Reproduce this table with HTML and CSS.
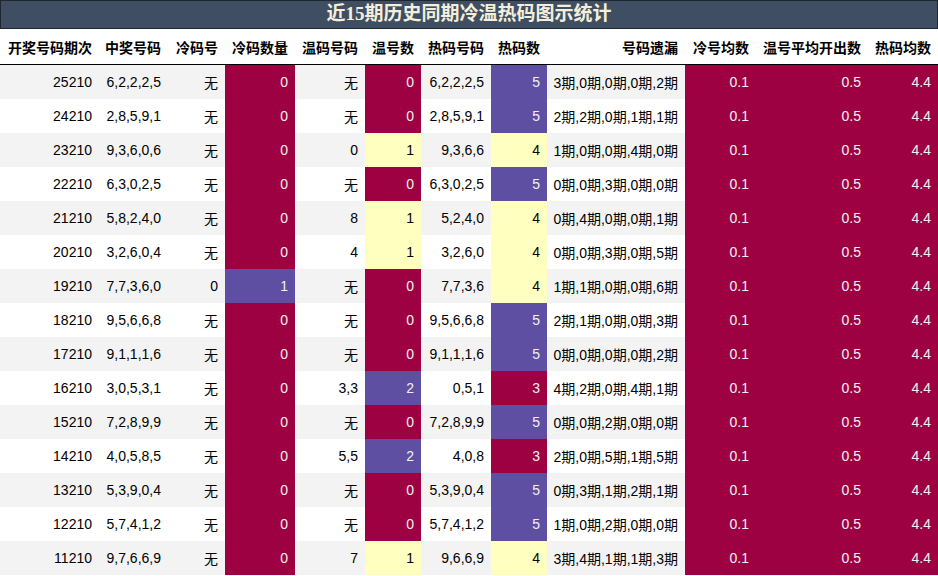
FILE: index.html
```html
<!DOCTYPE html>
<html lang="zh">
<head>
<meta charset="utf-8">
<title>近15期历史同期冷温热码图示统计</title>
<link rel="stylesheet" href="styles.css">
</head>
<body>
<div class="title">近15期历史同期冷温热码图示统计</div>
<table class="stats">
  <colgroup>
    <col class="w99"><col class="w69"><col class="w57"><col class="w70"><col class="w70"><col class="w56">
    <col class="w70"><col class="w56"><col class="w138"><col class="w71"><col class="w112"><col class="w70">
  </colgroup>
  <thead>
    <tr>
      <th>开奖号码期次</th><th>中奖号码</th><th>冷码号</th><th>冷码数量</th><th>温码号码</th><th>温号数</th>
      <th>热码号码</th><th>热码数</th><th>号码遗漏</th><th>冷号均数</th><th>温号平均开出数</th><th>热码均数</th>
    </tr>
  </thead>
  <tbody>
    <tr><td>25210</td><td>6,2,2,2,5</td><td>无</td><td class="r">0</td><td>无</td><td class="r">0</td><td>6,2,2,2,5</td><td class="p">5</td><td>3期,0期,0期,0期,2期</td><td class="r">0.1</td><td class="r">0.5</td><td class="r">4.4</td></tr>
    <tr><td>24210</td><td>2,8,5,9,1</td><td>无</td><td class="r">0</td><td>无</td><td class="r">0</td><td>2,8,5,9,1</td><td class="p">5</td><td>2期,2期,0期,1期,1期</td><td class="r">0.1</td><td class="r">0.5</td><td class="r">4.4</td></tr>
    <tr><td>23210</td><td>9,3,6,0,6</td><td>无</td><td class="r">0</td><td>0</td><td class="y">1</td><td>9,3,6,6</td><td class="y">4</td><td>1期,0期,0期,4期,0期</td><td class="r">0.1</td><td class="r">0.5</td><td class="r">4.4</td></tr>
    <tr><td>22210</td><td>6,3,0,2,5</td><td>无</td><td class="r">0</td><td>无</td><td class="r">0</td><td>6,3,0,2,5</td><td class="p">5</td><td>0期,0期,3期,0期,0期</td><td class="r">0.1</td><td class="r">0.5</td><td class="r">4.4</td></tr>
    <tr><td>21210</td><td>5,8,2,4,0</td><td>无</td><td class="r">0</td><td>8</td><td class="y">1</td><td>5,2,4,0</td><td class="y">4</td><td>0期,4期,0期,0期,1期</td><td class="r">0.1</td><td class="r">0.5</td><td class="r">4.4</td></tr>
    <tr><td>20210</td><td>3,2,6,0,4</td><td>无</td><td class="r">0</td><td>4</td><td class="y">1</td><td>3,2,6,0</td><td class="y">4</td><td>0期,0期,3期,0期,5期</td><td class="r">0.1</td><td class="r">0.5</td><td class="r">4.4</td></tr>
    <tr><td>19210</td><td>7,7,3,6,0</td><td>0</td><td class="p">1</td><td>无</td><td class="r">0</td><td>7,7,3,6</td><td class="y">4</td><td>1期,1期,0期,0期,6期</td><td class="r">0.1</td><td class="r">0.5</td><td class="r">4.4</td></tr>
    <tr><td>18210</td><td>9,5,6,6,8</td><td>无</td><td class="r">0</td><td>无</td><td class="r">0</td><td>9,5,6,6,8</td><td class="p">5</td><td>2期,1期,0期,0期,3期</td><td class="r">0.1</td><td class="r">0.5</td><td class="r">4.4</td></tr>
    <tr><td>17210</td><td>9,1,1,1,6</td><td>无</td><td class="r">0</td><td>无</td><td class="r">0</td><td>9,1,1,1,6</td><td class="p">5</td><td>0期,0期,0期,0期,2期</td><td class="r">0.1</td><td class="r">0.5</td><td class="r">4.4</td></tr>
    <tr><td>16210</td><td>3,0,5,3,1</td><td>无</td><td class="r">0</td><td>3,3</td><td class="p">2</td><td>0,5,1</td><td class="r">3</td><td>4期,2期,0期,4期,1期</td><td class="r">0.1</td><td class="r">0.5</td><td class="r">4.4</td></tr>
    <tr><td>15210</td><td>7,2,8,9,9</td><td>无</td><td class="r">0</td><td>无</td><td class="r">0</td><td>7,2,8,9,9</td><td class="p">5</td><td>0期,0期,2期,0期,0期</td><td class="r">0.1</td><td class="r">0.5</td><td class="r">4.4</td></tr>
    <tr><td>14210</td><td>4,0,5,8,5</td><td>无</td><td class="r">0</td><td>5,5</td><td class="p">2</td><td>4,0,8</td><td class="r">3</td><td>2期,0期,5期,1期,5期</td><td class="r">0.1</td><td class="r">0.5</td><td class="r">4.4</td></tr>
    <tr><td>13210</td><td>5,3,9,0,4</td><td>无</td><td class="r">0</td><td>无</td><td class="r">0</td><td>5,3,9,0,4</td><td class="p">5</td><td>0期,3期,1期,2期,1期</td><td class="r">0.1</td><td class="r">0.5</td><td class="r">4.4</td></tr>
    <tr><td>12210</td><td>5,7,4,1,2</td><td>无</td><td class="r">0</td><td>无</td><td class="r">0</td><td>5,7,4,1,2</td><td class="p">5</td><td>1期,0期,2期,0期,0期</td><td class="r">0.1</td><td class="r">0.5</td><td class="r">4.4</td></tr>
    <tr><td>11210</td><td>9,7,6,6,9</td><td>无</td><td class="r">0</td><td>7</td><td class="y">1</td><td>9,6,6,9</td><td class="y">4</td><td>3期,4期,1期,1期,3期</td><td class="r">0.1</td><td class="r">0.5</td><td class="r">4.4</td></tr>
  </tbody>
</table>
</body>
</html>
```
FILE: styles.css
```css
html, body {
  margin: 0;
  padding: 0;
  background: #ffffff;
}
body {
  font-family: "Liberation Sans", "Noto Sans CJK SC", sans-serif;
  font-size: 14px;
  color: #000;
}
.title {
  box-sizing: border-box;
  width: 938px;
  height: 29px;
  background: #3f4e62;
  border: 1px solid #1e2630;
  color: #f4eedb;
  font-family: "Liberation Serif", "Noto Sans CJK SC", serif;
  font-weight: bold;
  font-size: 19px;
  line-height: 26px;
  text-align: center;
}
.stats {
  width: 938px;
  border-collapse: collapse;
  table-layout: fixed;
}
.w99 { width: 99px; }
.w69 { width: 69px; }
.w57 { width: 57px; }
.w70 { width: 70px; }
.w56 { width: 56px; }
.w138 { width: 138px; }
.w71 { width: 71px; }
.w112 { width: 112px; }
.stats th {
  height: 35px;
  padding: 0 7px 0 0;
  font-weight: bold;
  text-align: right;
  border-bottom: 1px solid #000;
  white-space: nowrap;
  background: #fff;
}
.stats td {
  height: 34px;
  padding: 0 7px 0 0;
  text-align: right;
  white-space: nowrap;
  color: #000;
}
.stats tbody tr:nth-child(odd) td { background: #f3f3f3; }
.stats tbody tr:nth-child(even) td { background: #ffffff; }
.stats tbody tr td.r { background: #9e0142; color: #f1f1f1; }
.stats tbody tr td.p { background: #5e4fa2; color: #f1f1f1; }
.stats tbody tr td.y { background: #ffffbf; color: #000; }
```
